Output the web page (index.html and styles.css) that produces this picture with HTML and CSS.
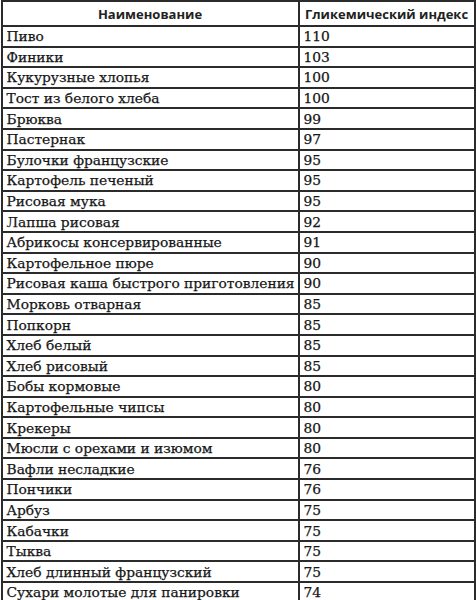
FILE: index.html
```html
<!DOCTYPE html>
<html lang="ru">
<head>
<meta charset="utf-8">
<link rel="stylesheet" href="styles.css">
</head>
<body>
<table class="gi">
<thead>
<tr class="head"><th class="c1">Наименование</th><th class="c2">Гликемический индекс</th></tr>
</thead>
<tbody>
<tr><td>Пиво</td><td>110</td></tr>
<tr><td>Финики</td><td>103</td></tr>
<tr><td>Кукурузные хлопья</td><td>100</td></tr>
<tr><td>Тост из белого хлеба</td><td>100</td></tr>
<tr><td>Брюква</td><td>99</td></tr>
<tr><td>Пастернак</td><td>97</td></tr>
<tr><td>Булочки французские</td><td>95</td></tr>
<tr><td>Картофель печеный</td><td>95</td></tr>
<tr><td>Рисовая мука</td><td>95</td></tr>
<tr><td>Лапша рисовая</td><td>92</td></tr>
<tr><td>Абрикосы консервированные</td><td>91</td></tr>
<tr><td>Картофельное пюре</td><td>90</td></tr>
<tr><td>Рисовая каша быстрого приготовления</td><td>90</td></tr>
<tr><td>Морковь отварная</td><td>85</td></tr>
<tr><td>Попкорн</td><td>85</td></tr>
<tr><td>Хлеб белый</td><td>85</td></tr>
<tr><td>Хлеб рисовый</td><td>85</td></tr>
<tr><td>Бобы кормовые</td><td>80</td></tr>
<tr><td>Картофельные чипсы</td><td>80</td></tr>
<tr><td>Крекеры</td><td>80</td></tr>
<tr><td>Мюсли с орехами и изюмом</td><td>80</td></tr>
<tr><td>Вафли несладкие</td><td>76</td></tr>
<tr><td>Пончики</td><td>76</td></tr>
<tr><td>Арбуз</td><td>75</td></tr>
<tr><td>Кабачки</td><td>75</td></tr>
<tr><td>Тыква</td><td>75</td></tr>
<tr><td>Хлеб длинный французский</td><td>75</td></tr>
<tr><td>Сухари молотые для панировки</td><td>74</td></tr>
</tbody>
</table>
</body>
</html>
```
FILE: styles.css
```css
html, body {
  margin: 0;
  padding: 0;
  background: #fff;
}
.gi {
  border-collapse: collapse;
  width: 475px;
  margin-left: 0.5px;
  table-layout: fixed;
  color: #161616;
}
.gi th, .gi td {
  border: 2px solid #2b2b2b;
  padding: 0 0 0 4px;
  text-align: left;
  vertical-align: middle;
  white-space: nowrap;
  overflow: hidden;
}
.gi th {
  font-family: "Open Sans", "Noto Sans", sans-serif;
  font-weight: 700;
  font-size: 13px;
  text-align: center;
  padding: 0;
  height: 23px;
  line-height: 16px;
  color: #222;
}
.gi th.c1 { width: 295px; }
.gi td {
  font-family: "DejaVu Serif", "Liberation Serif", serif;
  font-size: 13.8px;
  height: 18.6px;
  line-height: 16px;
  -webkit-text-stroke: 0.25px #161616;
}
```
